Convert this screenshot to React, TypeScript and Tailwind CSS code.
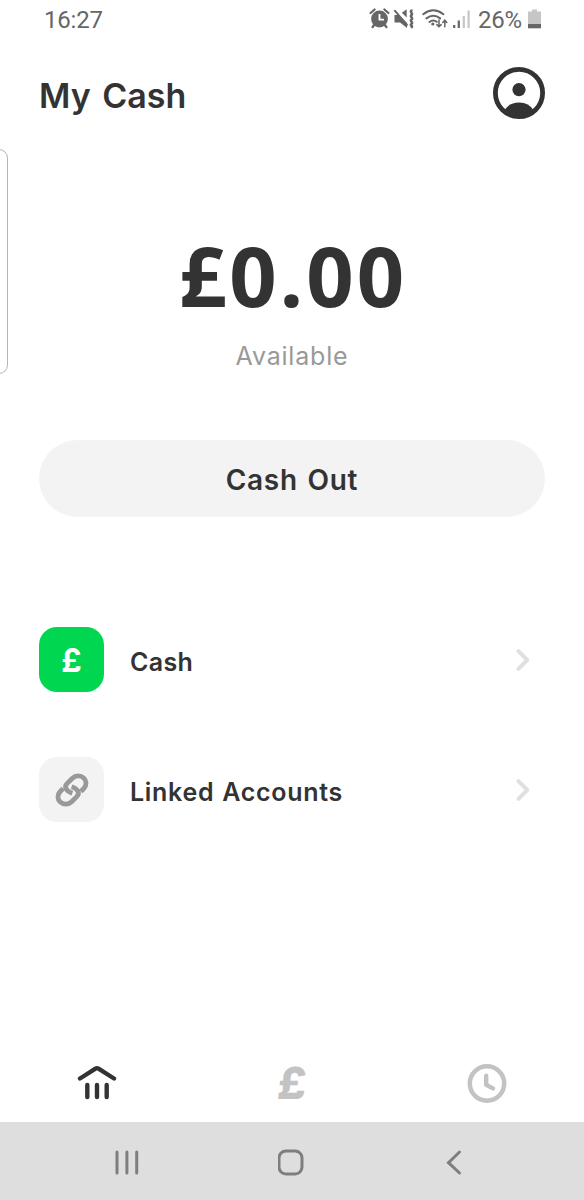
import type { ReactNode } from "react";

function StatusIcons() {
  return (
    <svg className="h-10 w-[104px] shrink-0" viewBox="368 0 104 40" fill="none" stroke="#666" strokeLinecap="round">
      {/* alarm */}
      <circle cx="379.5" cy="19" r="8.4" fill="#666" stroke="none" />
      <path d="M370.6 13l4-3.5M388.4 13l-4-3.5" strokeWidth="2.3" />
      <path d="M374.6 24.5l-2 2.6M384.4 24.5l2 2.6" strokeWidth="2.4" />
      <path d="M379.5 14v5.6h4.5" stroke="#fff" strokeWidth="1.9" strokeLinecap="butt" />
      {/* muted, vibrating */}
      <path d="M394.5 15h4l8.5 8v5l-7-5.5h-5.5zM401.8 12.8l4.9-3.6v8.2z" fill="#666" stroke="none" />
      <path d="M395 10.8l12 14" strokeWidth="2" />
      <path d="M411.5 10.5c-2.2 1.8 2.2 3 0 4.6s2.2 2.8 0 4.4 2.2 2.8 0 4.4 1.5 2 .3 3.3" strokeWidth="2.5" />
      {/* wifi */}
      <path d="M423.2 14.2q10-7.8 20.2 0M426.4 18.4q7-5.4 13.8 0M429.4 22q3.8-3 7.4-.2" strokeWidth="2" />
      <circle cx="432.8" cy="24" r="1.6" fill="#666" stroke="none" />
      <path d="M439 20v6.4M436.8 24.6l2.2 2.2 2.2-2.2M444.8 26.8v-6M442.8 22.4l2-2.2 2 2.2" strokeWidth="1.5" />
      {/* signal */}
      <path d="M454.2 25v3M458.8 20.5V28" strokeWidth="2.2" strokeLinecap="butt" />
      <path d="M463.8 16v12M468.6 10.5V28" stroke="#c6c6c6" strokeWidth="2.2" strokeLinecap="butt" />
    </svg>
  );
}

function Row({ icon, label, tile }: { icon: ReactNode; label: ReactNode; tile: string }) {
  return (
    <div className="flex h-[65px] items-center">
      <div className={`flex size-[65px] shrink-0 items-center justify-center rounded-[18px] ${tile}`}>{icon}</div>
      <div className="ml-[26px] flex-1 pt-1 text-[25px] leading-8 font-semibold">{label}</div>
      <svg className="mr-[14px] h-6 w-4" viewBox="0 0 16 24" fill="none" stroke="#e0e0e0" strokeWidth="4" strokeLinecap="round" strokeLinejoin="round">
        <path d="M3.4 3.2L12.3 12l-8.9 8.8" />
      </svg>
    </div>
  );
}

export default function App() {
  return (
    <div className="relative flex h-[1200px] w-[584px] flex-col overflow-hidden bg-white font-['Inter',sans-serif] text-[#333]">
      <div className="absolute top-[149px] -left-4 h-[225px] w-6 rounded-[9px] border border-[#b5b5b5]" />

      <div className="flex h-10 shrink-0 items-center pl-[44px] font-['Roboto',sans-serif] text-[#666]">
        <span className="text-[24px] leading-10 tracking-[-0.2px]">16:27</span>
        <div className="ml-auto flex items-center pr-[42px]">
          <StatusIcons />
          <span className="ml-1.5 w-[50px] text-[24px] leading-10 tracking-[-0.3px]">26%</span>
          <svg className="h-10 w-[14px]" viewBox="528 0 14 40">
            <path d="M532 9.5h5v2h4V24h-13V11.5h4z" fill="#c6c6c6" />
            <path d="M528 24h13v4.3h-13z" fill="#666" />
          </svg>
        </div>
      </div>

      <header className="flex h-[106px] shrink-0 items-center justify-between px-[39px]">
        <h1 className="pt-1.5 text-[34px] leading-10 font-semibold [word-spacing:3px]">My Cash</h1>
        <svg className="size-[52px]" viewBox="0 0 52 52">
          <circle cx="26" cy="26" r="23.6" fill="none" stroke="#333" strokeWidth="4.8" />
          <circle cx="26" cy="22.6" r="6.6" fill="#333" />
          <path d="M11 43.8q5-8.3 15-8.3t15 8.3Q34.5 50 26 50t-15-6.2z" fill="#333" />
        </svg>
      </header>

      <section className="flex h-[294px] shrink-0 flex-col items-center pt-[79px]">
        <div className="pl-0.5 font-['Noto_Sans',sans-serif] text-[83px] leading-[100px] font-bold tracking-[3px]">£0.00</div>
        <div className="mt-[15px] text-[25px] leading-8 tracking-[0.8px] text-[#999]">Available</div>
      </section>

      <button className="mx-[39px] flex h-[77px] shrink-0 items-center justify-center rounded-full bg-[#f3f3f3] pt-0.5 text-[28px] font-semibold tracking-[0.7px] [word-spacing:2px]">
        Cash Out
      </button>

      <div className="mt-[110px] flex flex-col gap-[65px] px-[39px]">
        <Row tile="bg-[#00d64f]" label={<span className="tracking-[0.3px]">Cash</span>} icon={<span className="pt-0.5 text-[32px] leading-8 font-bold text-white">£</span>} />
        <Row
          tile="bg-[#f3f3f3]"
          label={<span className="tracking-[0.7px] [word-spacing:1px]">Linked Accounts</span>}
          icon={
            <svg className="size-[34px]" viewBox="0 0 34 34" fill="none" stroke="#999" strokeWidth="4.8">
              <path d="M17.4 20.2C11.3 18.3 8.6 14 12.200 10.400L17.400 5.200C20.600 2.100 25.600 2 28.700 4.900S31.800 12.300 28.800 15.500L25.800 18.500" />
              <path d="M16.6 13.8C22.7 15.7 25.400 20 21.800 23.600L16.600 28.800C13.400 31.900 8.400 32 5.300 29.100S2.200 21.700 5.200 18.500L8.200 15.500" />
            </svg>
          }
        />
      </div>

      <nav className="mt-auto flex h-[78px] shrink-0 items-center">
        <div className="flex flex-1 justify-center">
          <svg className="size-10" viewBox="0 0 40 40" fill="none" stroke="#333" strokeWidth="4.4" strokeLinecap="round" strokeLinejoin="round">
            <path d="M3 15.5L18.5 5.7Q20 4.8 21.5 5.7L37 15.5M10.3 22v12M20 22v12M29.7 22v12" />
          </svg>
        </div>
        <div className="flex flex-1 justify-center">
          <span className="-skew-x-6 text-[44px] leading-[44px] font-extrabold text-[#c3c3c3]">£</span>
        </div>
        <div className="flex flex-1 justify-center">
          <svg className="size-10" viewBox="0 0 40 40" fill="none" stroke="#c3c3c3" strokeLinecap="round" strokeLinejoin="round">
            <circle cx="20" cy="20.5" r="17.2" strokeWidth="4.5" />
            <path d="M19.2 12.7v9l6.8 3.7" strokeWidth="4.4" />
          </svg>
        </div>
      </nav>

      <div className="flex h-[78px] shrink-0 items-center justify-between bg-[#dedede] px-[113px] pt-1">
        <svg className="h-7 w-7" viewBox="0 0 28 28" fill="none" stroke="#7e7e7e" strokeWidth="3" strokeLinecap="round">
          <path d="M4 3v21M13.9 3v21M23.7 3v21" />
        </svg>
        <svg className="h-7 w-7" viewBox="0 0 28 28" fill="none" stroke="#7e7e7e" strokeWidth="3">
          <rect x="1" y="2" width="23" height="23" rx="7" />
        </svg>
        <svg className="h-7 w-7" viewBox="0 0 28 28" fill="none" stroke="#7e7e7e" strokeWidth="3" strokeLinecap="round">
          <path d="M16.5 3L5.5 13.7L16.5 24" />
        </svg>
      </div>
    </div>
  );
}
